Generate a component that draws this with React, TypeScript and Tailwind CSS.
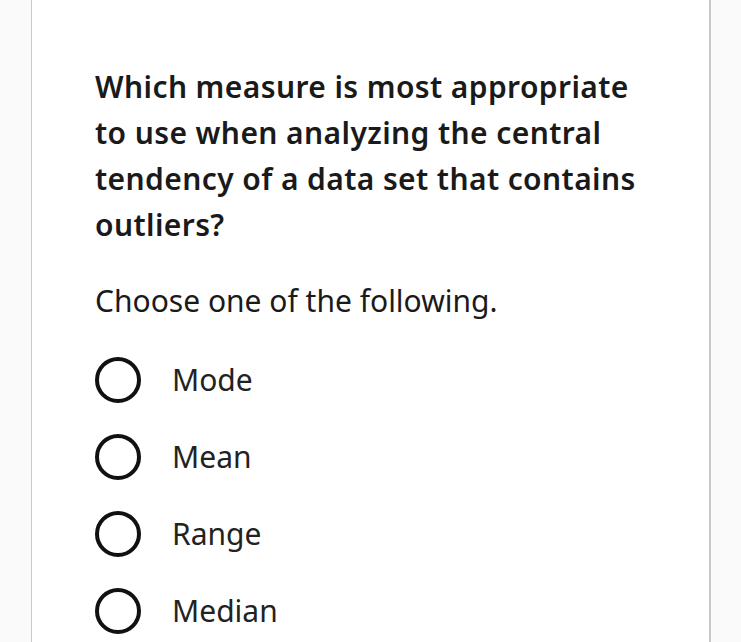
const options = ["Mode", "Mean", "Range", "Median"];

export default function App() {
  return (
    <div
      className="min-h-screen bg-[#fafafa] text-[#1a1a1a]"
      style={{ fontFamily: '"Noto Sans", "Open Sans", sans-serif' }}
    >
      <div className="ml-[31px] w-[680px] min-h-screen bg-white border-l border-r-2 border-[#c9c9c9] pl-[63px] pr-[70px] pt-[64px]">
        <p className="text-[30px] leading-[46px] font-semibold tracking-[0.4px]">
          Which measure is most appropriate to use when analyzing the central
          tendency of a data set that contains outliers?
        </p>

        <p className="mt-[30px] text-[30px] leading-[46px]">
          Choose one of the following.
        </p>

        <div className="mt-[33px] flex flex-col gap-[31px]">
          {options.map((o) => (
            <label key={o} className="flex items-center gap-[31px] cursor-pointer">
              <span className="w-[46px] h-[46px] rounded-full border-[4px] border-[#111] shrink-0" />
              <span className="text-[30px] leading-[46px] text-[#222]">{o}</span>
            </label>
          ))}
        </div>
      </div>
    </div>
  );
}
